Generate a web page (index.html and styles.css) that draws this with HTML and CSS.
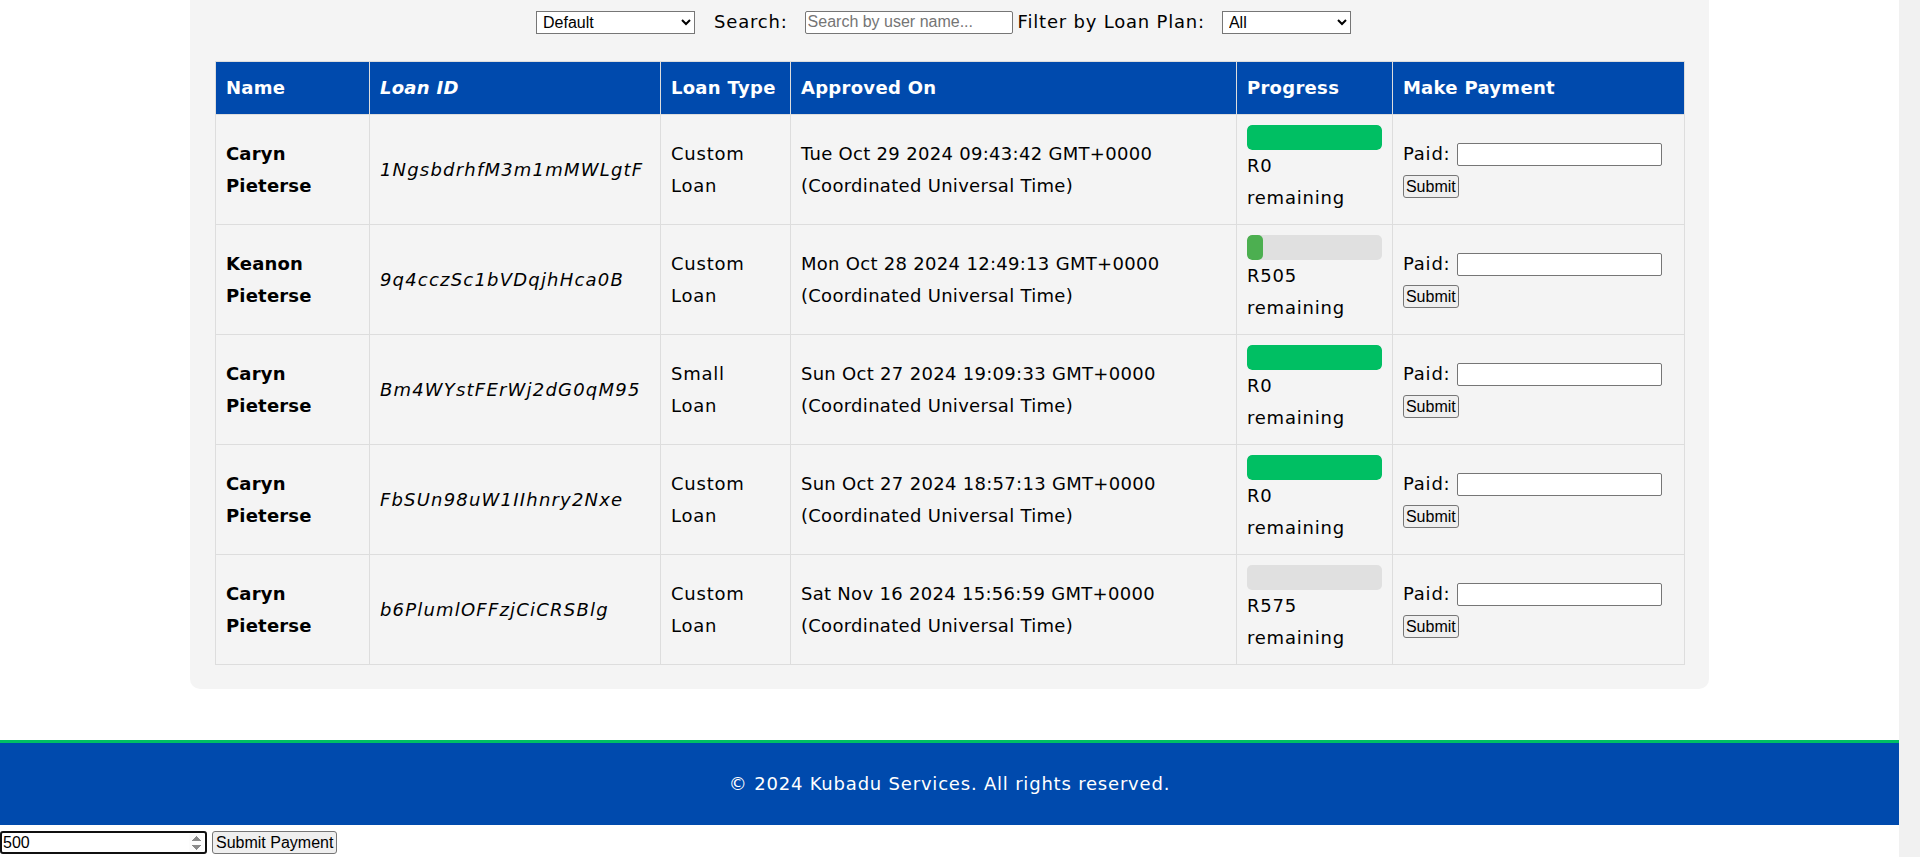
FILE: index.html
```html
<!DOCTYPE html>
<html lang="en">
<head>
<meta charset="utf-8">
<title>Loans - Kubadu Services</title>
<link rel="stylesheet" href="styles.css">
</head>
<body>
<main class="page">
  <section class="card">
    <div class="controls">
      <select class="ctl-select sort-select">
        <option>Default</option>
      </select>
      <label class="ctl-label search-label" for="search">Search:</label>
      <input id="search" class="ctl-input" type="text" placeholder="Search by user name...">
      <label class="ctl-label filter-label" for="plan">Filter by Loan Plan:</label>
      <select id="plan" class="ctl-select plan-select">
        <option>All</option>
      </select>
    </div>

    <table class="loans">
      <colgroup>
        <col class="c-name">
        <col class="c-id">
        <col class="c-type">
        <col class="c-date">
        <col class="c-progress">
        <col class="c-pay">
      </colgroup>
      <thead>
        <tr>
          <th>Name</th>
          <th class="th-id">Loan ID</th>
          <th>Loan Type</th>
          <th>Approved On</th>
          <th>Progress</th>
          <th>Make Payment</th>
        </tr>
      </thead>
      <tbody>
        <tr>
          <td class="name">Caryn Pieterse</td>
          <td class="loan-id">1NgsbdrhfM3m1mMWLgtF</td>
          <td><span class="stack">Custom Loan</span></td>
          <td class="date">Tue Oct 29 2024 09:43:42 GMT+0000 (Coordinated Universal Time)</td>
          <td><div class="bar"><div class="fill fill-done" style="width:100%"></div></div><span class="stack">R0 remaining</span></td>
          <td><label class="paid-label">Paid:</label> <input class="paid-input" type="text"> <button class="btn">Submit</button></td>
        </tr>
        <tr>
          <td class="name">Keanon Pieterse</td>
          <td class="loan-id">9q4cczSc1bVDqjhHca0B</td>
          <td><span class="stack">Custom Loan</span></td>
          <td class="date">Mon Oct 28 2024 12:49:13 GMT+0000 (Coordinated Universal Time)</td>
          <td><div class="bar"><div class="fill fill-part" style="width:12.2%"></div></div><span class="stack">R505 remaining</span></td>
          <td><label class="paid-label">Paid:</label> <input class="paid-input" type="text"> <button class="btn">Submit</button></td>
        </tr>
        <tr>
          <td class="name">Caryn Pieterse</td>
          <td class="loan-id">Bm4WYstFErWj2dG0qM95</td>
          <td><span class="stack">Small Loan</span></td>
          <td class="date">Sun Oct 27 2024 19:09:33 GMT+0000 (Coordinated Universal Time)</td>
          <td><div class="bar"><div class="fill fill-done" style="width:100%"></div></div><span class="stack">R0 remaining</span></td>
          <td><label class="paid-label">Paid:</label> <input class="paid-input" type="text"> <button class="btn">Submit</button></td>
        </tr>
        <tr>
          <td class="name">Caryn Pieterse</td>
          <td class="loan-id">FbSUn98uW1IIhnry2Nxe</td>
          <td><span class="stack">Custom Loan</span></td>
          <td class="date">Sun Oct 27 2024 18:57:13 GMT+0000 (Coordinated Universal Time)</td>
          <td><div class="bar"><div class="fill fill-done" style="width:100%"></div></div><span class="stack">R0 remaining</span></td>
          <td><label class="paid-label">Paid:</label> <input class="paid-input" type="text"> <button class="btn">Submit</button></td>
        </tr>
        <tr>
          <td class="name">Caryn Pieterse</td>
          <td class="loan-id">b6PlumlOFFzjCiCRSBlg</td>
          <td><span class="stack">Custom Loan</span></td>
          <td class="date">Sat Nov 16 2024 15:56:59 GMT+0000 (Coordinated Universal Time)</td>
          <td><div class="bar"><div class="fill fill-part" style="width:0%"></div></div><span class="stack">R575 remaining</span></td>
          <td><label class="paid-label">Paid:</label> <input class="paid-input" type="text"> <button class="btn">Submit</button></td>
        </tr>
      </tbody>
    </table>
  </section>
</main>

<footer class="site-footer">
  <p class="footer-text">© 2024 Kubadu Services. All rights reserved.</p>
</footer>

<div class="quick-pay">
  <input class="amount" type="number" value="500">
  <button class="btn btn-pay">Submit Payment</button>
</div>
</body>
</html>
```

FILE: styles.css
```css
html {
  background: #f1f1f1;
}

body {
  margin: 0 21px 0 0;
  min-height: 100vh;
  background: #ffffff;
  color: #000000;
  font-family: "DejaVu Sans", "Noto Sans", sans-serif;
  font-size: 18px;
  line-height: 32px;
  letter-spacing: 0.8px;
}

.page {
  padding: 0;
}

.card {
  width: 80%;
  margin: 0 auto 51px;
  box-sizing: border-box;
  background: #f4f4f4;
  border-radius: 0 0 10px 10px;
  padding: 6px 25px 24px;
}

.controls {
  display: flex;
  justify-content: center;
  align-items: center;
  height: 32px;
  margin-bottom: 23px;
}

.ctl-select,
.ctl-input,
.paid-input,
.amount,
.btn {
  font-family: "Liberation Sans", Arial, sans-serif;
  font-size: 16px;
  letter-spacing: normal;
  color: #000000;
  box-sizing: border-box;
  height: 23px;
}

.ctl-select {
  border: 1px solid #767676;
  border-radius: 0;
  background: #ffffff;
  padding: 0 2px;
}

.sort-select {
  width: 159px;
  margin-right: 19px;
}

.plan-select {
  width: 129px;
  margin-left: 17px;
  margin-right: 12px;
}

.ctl-label {
  white-space: nowrap;
}

.search-label {
  margin-right: 17px;
}

.ctl-input {
  width: 208px;
  border: 1px solid #767676;
  border-radius: 2px;
  padding: 1px 2px;
  margin-right: 5px;
  background: #ffffff;
}

.ctl-input::placeholder {
  color: #757575;
}

.loans {
  width: 100%;
  border-collapse: collapse;
  table-layout: fixed;
}

.c-name { width: 154px; }
.c-id { width: 291px; }
.c-type { width: 130px; }
.c-date { width: 446px; }
.c-progress { width: 156px; }
.c-pay { width: 292px; }

.loans th,
.loans td {
  border: 1px solid #dddddd;
  padding: 10px;
  text-align: left;
  vertical-align: middle;
}

.loans th {
  background: #004aad;
  color: #ffffff;
  font-weight: bold;
  letter-spacing: 0.3px;
  white-space: nowrap;
}

.loans th.th-id {
  font-style: italic;
}

.loans td {
  background: #f4f4f4;
}

.name {
  font-weight: bold;
  letter-spacing: 0.2px;
}

.loan-id {
  font-style: italic;
  letter-spacing: 1.2px;
}

.date {
  letter-spacing: 0.3px;
}

.stack {
  display: block;
  width: min-content;
}

.bar {
  height: 25px;
  background: #e0e0e0;
  border-radius: 5px;
  overflow: hidden;
}

.fill {
  height: 100%;
  border-radius: 5px;
}

.fill-done {
  background: #00bf63;
}

.fill-part {
  background: #4caf50;
}

.paid-label {
  letter-spacing: 0.8px;
}

.paid-input {
  width: 205px;
  border: 1px solid #767676;
  border-radius: 2px;
  padding: 1px 2px;
  background: #ffffff;
  vertical-align: baseline;
}

.btn {
  background: #efefef;
  border: 1px solid #767676;
  border-radius: 3px;
  padding: 1px 2px;
  cursor: pointer;
}

.site-footer {
  background: #004aad;
  border-top: 3px solid #00bf63;
  color: #ffffff;
  text-align: center;
  padding: 25px;
}

.footer-text {
  margin: 0;
}

.quick-pay {
  display: flex;
  align-items: flex-start;
  gap: 5px;
  padding-top: 6px;
}

.amount {
  width: 207px;
  border: 2px solid #101010;
  border-radius: 3px;
  padding: 0 1px;
  background: #ffffff;
}

.amount::-webkit-inner-spin-button {
  opacity: 1;
}

.btn-pay {
  padding: 1px 3px;
}
```
